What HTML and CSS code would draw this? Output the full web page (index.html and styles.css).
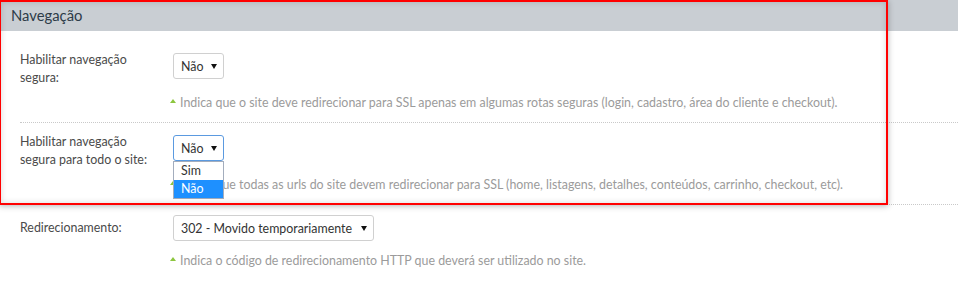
FILE: index.html
```html
<!DOCTYPE html>
<html lang="pt-BR">
<head>
<meta charset="utf-8">
<title>Navegação</title>
<link rel="stylesheet" href="styles.css">
</head>
<body>
<section class="panel">
  <h2 class="panel-title">Navegação</h2>
  <div class="panel-body">
    <div class="row">
      <div class="label">Habilitar navegação segura:</div>
      <div class="select select-sm"><span>Não</span><span class="caret"></span></div>
      <div class="hint"><span class="tri"></span>Indica que o site deve redirecionar para SSL apenas em algumas rotas seguras (login, cadastro, área do cliente e checkout).</div>
    </div>
    <div class="row">
      <div class="label">Habilitar navegação segura para todo o site:</div>
      <div class="select select-sm is-open"><span>Não</span><span class="caret"></span>
        <ul class="options">
          <li class="option">Sim</li>
          <li class="option is-active">Não</li>
        </ul>
      </div>
      <div class="hint"><span class="tri"></span>Indica que todas as urls do site devem redirecionar para SSL (home, listagens, detalhes, conteúdos, carrinho, checkout, etc).</div>
    </div>
    <div class="row row-single">
      <div class="label">Redirecionamento:</div>
      <div class="select select-lg"><span>302 - Movido temporariamente</span><span class="caret"></span></div>
      <div class="hint"><span class="tri"></span>Indica o código de redirecionamento HTTP que deverá ser utilizado no site.</div>
    </div>
  </div>
  <div class="highlight"></div>
</section>
</body>
</html>
```
FILE: styles.css
```css
* { box-sizing: border-box; }
body {
  margin: 0;
  background: #fff;
  font-family: Lato, "Open Sans", sans-serif;
  font-size: 12.4px;
  color: #4a4a4a;
}
.panel { position: relative; }
.panel-title {
  margin: 0;
  height: 31px;
  padding-left: 11px;
  background: #c9ced3;
  font-size: 14.8px;
  font-weight: normal;
  line-height: 31px;
  color: #2d3b48;
}
.panel-body { padding-top: 10px; }
.row {
  margin-left: 20px;
  padding: 12px 0 10px;
  border-bottom: 1px dotted #c9c9c9;
  display: grid;
  grid-template-columns: 153px 1fr;
  grid-template-rows: 26px auto;
  align-items: start;
}
.row:last-child { border-bottom: none; }
.label {
  grid-column: 1;
  grid-row: 1 / span 2;
  width: 140px;
  margin-top: -2px;
  line-height: 18px;
  color: #4a4a4a;
}
.select {
  grid-column: 2;
  grid-row: 1;
  position: relative;
  height: 26px;
  padding: 0 6px 0 7px;
  border: 1px solid #d0d0d0;
  border-radius: 3px;
  display: flex;
  align-items: center;
  justify-content: space-between;
  color: #333;
  background: #fff;
  white-space: nowrap;
}
.select-sm { width: 51px; }
.select-lg { width: 201px; }
.select.is-open { border-color: #5b9ae0; }
.caret {
  flex: none;
  width: 0;
  height: 0;
  border-left: 3px solid transparent;
  border-right: 3px solid transparent;
  border-top: 5px solid #111;
}
.options {
  position: absolute;
  top: calc(100% + 1px);
  left: -1px;
  width: 51px;
  margin: 0;
  padding: 0;
  list-style: none;
  border: 1px solid #a3adbd;
  background: #fff;
  z-index: 2;
}
.option {
  height: 18px;
  line-height: 18px;
  padding-left: 7px;
  color: #333;
}
.option.is-active { background: #1e90ff; color: #fff; }
.hint {
  grid-column: 2;
  grid-row: 2;
  margin-top: 15px;
  margin-left: -3px;
  line-height: 18px;
  display: flex;
  align-items: center;
  color: #9b9b9b;
  white-space: nowrap;
}
.tri {
  width: 0;
  height: 0;
  margin: 0 4px 4px 0;
  border-left: 3px solid transparent;
  border-right: 3px solid transparent;
  border-bottom: 4px solid #8cc63f;
}
.row-single { padding-top: 10px; }
.row-single .label { margin-top: 4px; }
.row-single .hint { margin-top: 11px; }
.highlight {
  position: absolute;
  top: 0;
  left: -1px;
  width: 889px;
  height: 205px;
  border: 2px solid #f00;
  box-shadow: 0 1px 6px rgba(0,0,0,0.3), inset 0 0 6px rgba(0,0,0,0.15);
  pointer-events: none;
  z-index: 3;
}
```
